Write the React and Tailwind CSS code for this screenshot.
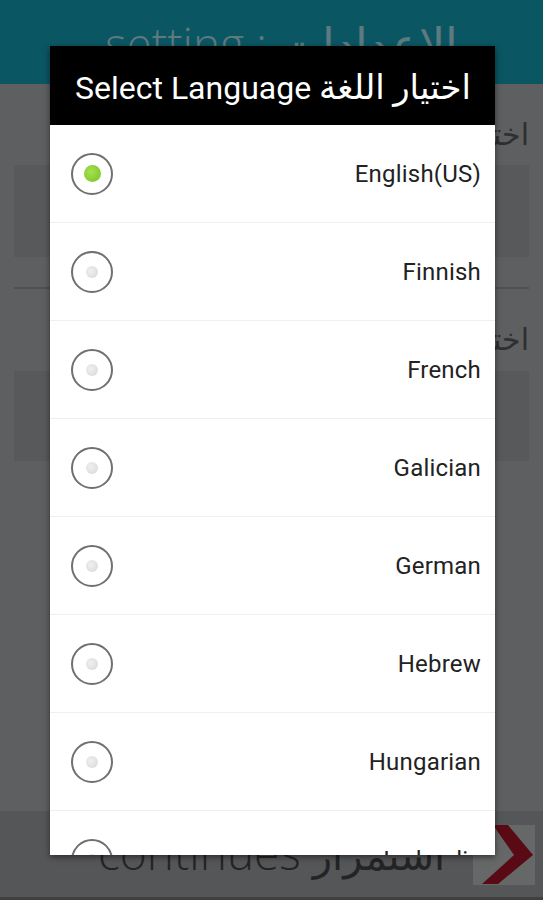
import { useState } from "react";

const languages = [
  "English(US)",
  "Finnish",
  "French",
  "Galician",
  "German",
  "Hebrew",
  "Hungarian",
  "Icelandic",
];

function Radio({ on }) {
  return (
    <div className="w-[42px] h-[42px] rounded-full border-2 border-[#707070] flex items-center justify-center shrink-0">
      {on ? (
        <div className="w-[17px] h-[17px] rounded-full bg-[radial-gradient(circle_at_40%_40%,#a6e052,#78c21f)]" />
      ) : (
        <div className="w-[12px] h-[12px] rounded-full bg-[radial-gradient(circle_at_40%_40%,#f0f0f0,#d6d6d6)]" />
      )}
    </div>
  );
}

export default function App() {
  const [selected, setSelected] = useState("English(US)");

  return (
    <div className="relative w-[543px] h-[900px] overflow-hidden bg-[#5e5f61] font-['Open_Sans',sans-serif]">
      {/* dimmed settings screen behind the dialog */}
      <div className="h-[84px] bg-[#0b5663] flex justify-center pt-[20px] pl-[20px]">
        <p className="text-[46px] leading-none text-[#5f7a7f] font-light">setting : الإعدادات</p>
      </div>

      <div className="px-[14px]">
        <p className="text-right text-[30px] leading-none text-[#2e2f30] mt-[36px] font-['DejaVu_Sans',sans-serif]">اختر اللغة</p>
        <div className="h-[92px] mt-[15px] bg-[#58595b]" />
        <div className="h-[2px] mt-[30px] bg-[#4f5052]" />
        <p className="text-right text-[30px] leading-none text-[#2e2f30] mt-[36px] font-['DejaVu_Sans',sans-serif]">اختر البلد</p>
        <div className="h-[90px] mt-[16px] bg-[#58595b]" />
      </div>

      <div className="absolute left-0 right-0 bottom-0 h-[89px] bg-[#555658] border-b-[3px] border-[#3f4042] flex items-center">
        <p className="flex-1 text-center text-[46px] leading-none text-[#232425] font-light pl-[70px] pb-[4px]">
          continues <span className="font-['DejaVu_Sans',sans-serif] font-normal text-[40px]">استمرار</span>
        </p>
        <div className="w-[62px] h-[60px] mr-[8px] bg-[#656867] mt-[2px]">
          <svg width="62" height="60" viewBox="0 0 62 60">
            <path d="M20 0 H35 L60 30 L25 59 H9 L41 30 Z" fill="#5a0a14" />
          </svg>
        </div>
      </div>

      {/* language dialog */}
      <div className="absolute left-[50px] top-[46px] w-[445px] h-[809px] bg-white shadow-[0_2px_6px_rgba(0,0,0,0.5)] flex flex-col overflow-hidden font-['Roboto','DejaVu_Sans',sans-serif]">
        <div className="h-[79px] bg-black flex items-center pl-[25px] shrink-0">
          <p className="text-white text-[32px] leading-none pt-[2px]">
            Select Language <span className="text-[34px]">اختيار اللغة</span>
          </p>
        </div>
        <div className="flex-1 overflow-hidden">
          {languages.map((lang) => (
            <div
              key={lang}
              onClick={() => setSelected(lang)}
              className="h-[98px] flex items-center justify-between pl-[21px] pr-[14px] border-b border-[#efefef]"
            >
              <Radio on={selected === lang} />
              <span className="text-[24px] text-[#222] tracking-[0.2px]">{lang}</span>
            </div>
          ))}
        </div>
      </div>
    </div>
  );
}
